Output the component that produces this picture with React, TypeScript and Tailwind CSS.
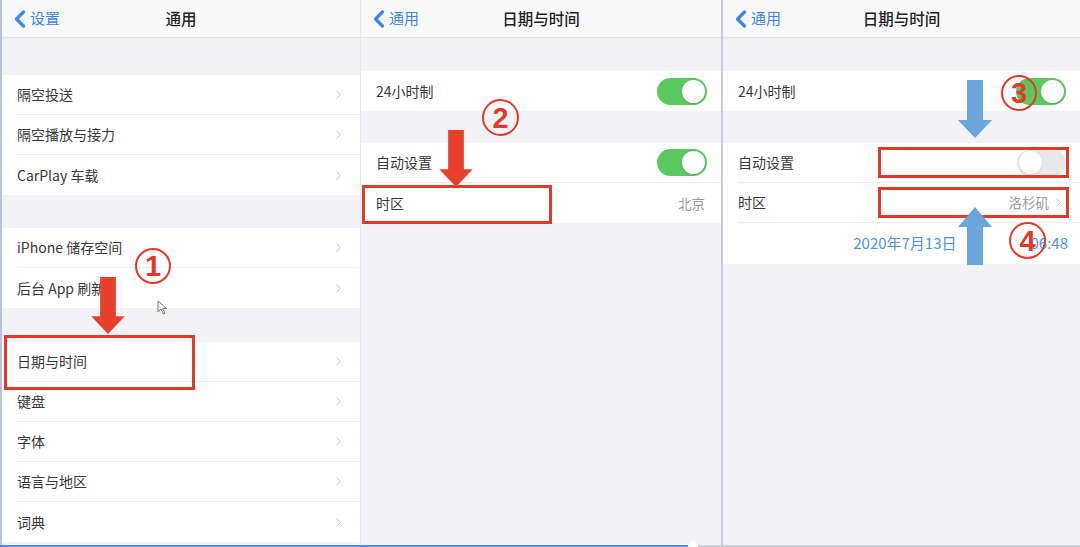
import { ChevronLeft, ChevronRight } from "lucide-react"

const font = { fontFamily: '"Noto Sans CJK SC", "Liberation Sans", sans-serif' }

function Header({ back, title }: { back: string; title: string }) {
  return (
    <div className="h-[38px] shrink-0 bg-[#f9f9fa] border-b border-[#e2e2e6] relative flex items-center justify-center">
      <div className="absolute left-[4px] top-0 h-full flex items-center text-[#3d86e8]">
        <ChevronLeft size={28} strokeWidth={2.8} />
        <span className="text-[15px] -ml-[4px]">{back}</span>
      </div>
      <span className="text-[15.5px] font-medium text-[#222]">{title}</span>
    </div>
  )
}

function Toggle({ on }: { on: boolean }) {
  return on ? (
    <div className="w-[50px] h-[27px] rounded-full bg-[#5ac85e] flex items-center justify-end pr-[2px]">
      <div className="w-[23px] h-[23px] rounded-full bg-white shadow" />
    </div>
  ) : (
    <div className="w-[49px] h-[26px] rounded-full bg-[#e8e8ea] flex items-center pl-[2px]">
      <div className="w-[23px] h-[23px] rounded-full bg-white shadow" />
    </div>
  )
}

function Row({
  label,
  value,
  chevron,
  toggle,
  last,
}: {
  label: string
  value?: string
  chevron?: boolean
  toggle?: boolean
  last?: boolean
}) {
  return (
    <div className="h-[40px] bg-white pl-[15px] flex">
      <div className={`flex-1 flex items-center pr-[14px] ${last ? "" : "border-b border-[#ececef]"}`}>
        <span className="flex-1 text-[14px] text-[#383838]">{label}</span>
        {value && <span className="text-[13.5px] text-[#9b9b9f] mr-[2px]">{value}</span>}
        {chevron && <ChevronRight size={15} strokeWidth={1.6} className="text-[#c3c3c7]" />}
        {toggle !== undefined && <Toggle on={toggle} />}
      </div>
    </div>
  )
}

function Circle({ n, className }: { n: string; className: string }) {
  return (
    <div
      className={`absolute rounded-full border-[2.5px] border-[#e23a2a] flex items-center justify-center text-[#e23a2a] text-[29px] font-semibold leading-none pt-[1px] ${className}`}
      style={{ fontFamily: '"Liberation Sans", sans-serif' }}
    >
      {n}
    </div>
  )
}

function DownArrow({ color, className }: { color: string; className: string }) {
  return (
    <svg className={`absolute ${className}`} viewBox="0 0 34 58">
      <rect x="9" y="0" width="16" height="42" fill={color} />
      <polygon points="0,40 34,40 17,58" fill={color} />
    </svg>
  )
}

function UpArrow({ color, className }: { color: string; className: string }) {
  return (
    <svg className={`absolute ${className}`} viewBox="0 0 34 58">
      <polygon points="0,20 34,20 17,0" fill={color} />
      <rect x="9" y="18" width="16" height="40" fill={color} />
    </svg>
  )
}

export default function App() {
  return (
    <div className="w-[1080px] h-[547px] relative overflow-hidden bg-[#f2f2f7]" style={font}>
      <div className="flex h-[545px]">
        {/* panel 1 */}
        <div className="w-[360px] flex flex-col border-l-2 border-[#b9c3df]">
          <Header back="设置" title="通用" />
          <div className="h-[37px] shrink-0" />
          <Row label="隔空投送" chevron />
          <Row label="隔空播放与接力" chevron />
          <Row label="CarPlay 车载" chevron last />
          <div className="h-[33px] shrink-0" />
          <Row label="iPhone 储存空间" chevron />
          <Row label="后台 App 刷新" chevron last />
          <div className="h-[34px] shrink-0" />
          <Row label="日期与时间" chevron />
          <Row label="键盘" chevron />
          <Row label="字体" chevron />
          <Row label="语言与地区" chevron />
          <Row label="词典" chevron last />
        </div>

        {/* panel 2 */}
        <div className="w-[361px] flex flex-col border-l border-[#e6e6ea]">
          <Header back="通用" title="日期与时间" />
          <div className="h-[33px] shrink-0" />
          <Row label="24小时制" toggle={true} last />
          <div className="h-[32px] shrink-0" />
          <Row label="自动设置" toggle={true} />
          <Row label="时区" value="北京" last />
        </div>

        {/* panel 3 */}
        <div className="flex-1 flex flex-col border-l-2 border-[#c9c9dc]">
          <Header back="通用" title="日期与时间" />
          <div className="h-[33px] shrink-0" />
          <Row label="24小时制" toggle={true} last />
          <div className="h-[32px] shrink-0" />
          <Row label="自动设置" toggle={false} />
          <Row label="时区" value="洛杉矶" chevron />
          <div className="h-[41px] bg-white flex items-center justify-end pr-[12px] text-[15px] text-[#4b93e0]">
            <span>2020年7月13日</span>
            <span className="ml-[74px]">06:48</span>
          </div>
        </div>
      </div>

      {/* video progress bar */}
      <div className="flex h-[2px] items-center">
        <div className="w-[688px] h-[2px] bg-[#4f8ff5]" />
        <div className="w-[10px] h-[10px] rounded-full bg-white -my-[4px]" />
        <div className="flex-1 h-[2px] bg-[#cfcfd6]" />
      </div>

      {/* annotations */}
      <div className="absolute left-[4px] top-[335px] w-[191px] h-[55px] border-[3px] border-[#e23a2a]" />
      <DownArrow color="#e8402d" className="left-[91px] top-[277px] w-[34px] h-[57px]" />
      <Circle n="1" className="left-[135px] top-[248px] w-[36px] h-[36px]" />
      <svg className="absolute left-[157px] top-[300px] w-[11px] h-[15px]" viewBox="0 0 11 15">
        <path d="M1 1 L1 12 L4 9 L6.5 14 L8 13.3 L5.6 8.5 L9.5 8.5 Z" fill="white" stroke="#777" strokeWidth="1" />
      </svg>

      <div className="absolute left-[362px] top-[185px] w-[190px] h-[39px] border-[3px] border-[#e23a2a]" />
      <DownArrow color="#e8402d" className="left-[439px] top-[130px] w-[34px] h-[57px]" />
      <Circle n="2" className="left-[482px] top-[99px] w-[37px] h-[37px]" />

      <div className="absolute left-[878px] top-[147px] w-[191px] h-[31px] border-[3px] border-[#e23a2a]" />
      <div className="absolute left-[878px] top-[187px] w-[191px] h-[31px] border-[3px] border-[#e23a2a]" />
      <DownArrow color="#6aa5dc" className="left-[958px] top-[80px] w-[34px] h-[58px]" />
      <UpArrow color="#6aa5dc" className="left-[958px] top-[207px] w-[34px] h-[58px]" />
      <Circle n="3" className="left-[1001px] top-[75px] w-[36px] h-[36px]" />
      <Circle n="4" className="left-[1009px] top-[222px] w-[37px] h-[37px]" />
    </div>
  )
}
